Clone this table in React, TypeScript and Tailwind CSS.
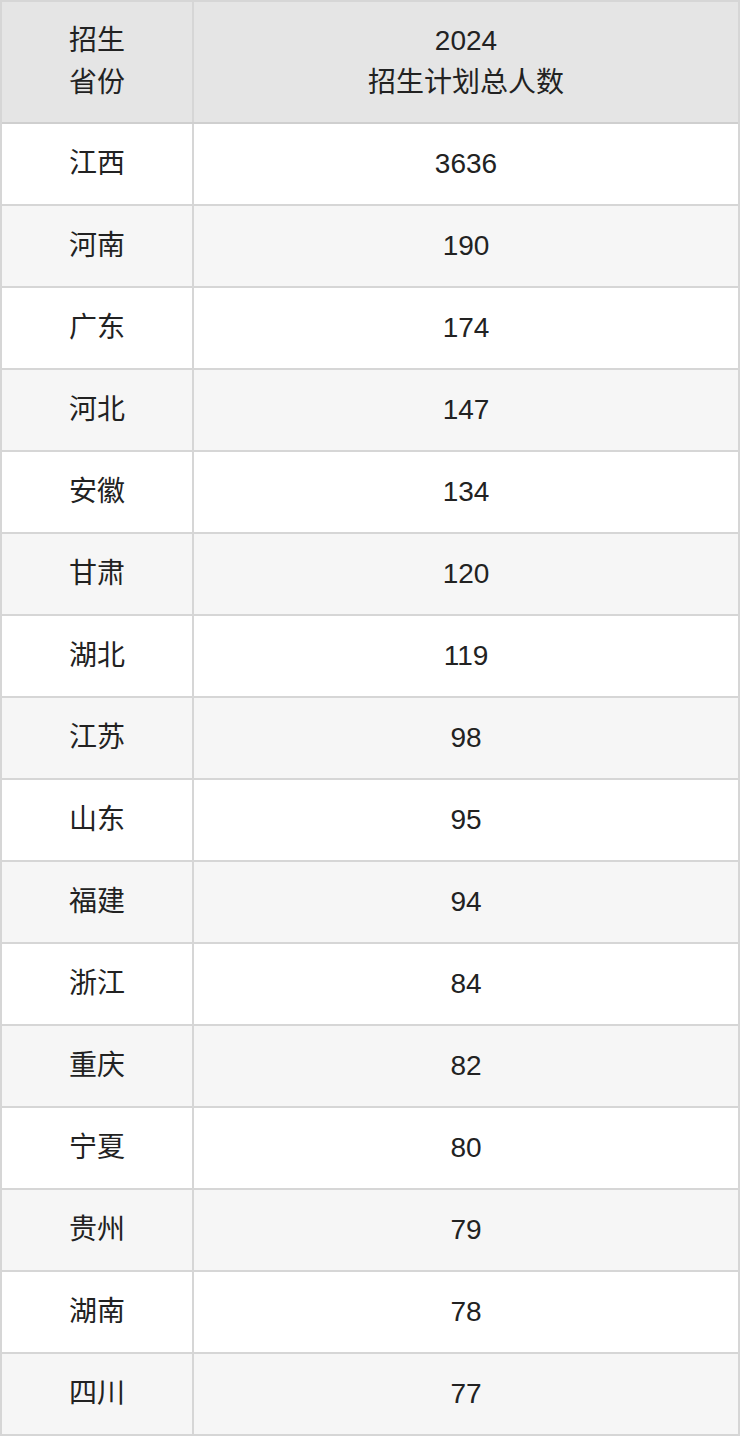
const rows: [string, string][] = [
  ['江西', '3636'],
  ['河南', '190'],
  ['广东', '174'],
  ['河北', '147'],
  ['安徽', '134'],
  ['甘肃', '120'],
  ['湖北', '119'],
  ['江苏', '98'],
  ['山东', '95'],
  ['福建', '94'],
  ['浙江', '84'],
  ['重庆', '82'],
  ['宁夏', '80'],
  ['贵州', '79'],
  ['湖南', '78'],
  ['四川', '77'],
];

export default function App() {
  return (
    <div
      className="w-[740px] bg-white text-[28px] leading-[42px] text-[#222]"
      style={{ fontFamily: '"Liberation Sans", "Noto Sans CJK SC", sans-serif' }}
    >
      <div className="border-x-2 border-t-2 border-[#d6d6d6]">
        <div className="flex h-[122px] border-b-2 border-[#cfcfcf] bg-[#e5e5e5]">
          <div className="flex w-[192px] shrink-0 items-center justify-center border-r-2 border-[#d6d6d6] text-center">
            招生
            <br />
            省份
          </div>
          <div className="flex flex-1 items-center justify-center text-center">
            2024
            <br />
            招生计划总人数
          </div>
        </div>
        {rows.map(([province, count], i) => (
          <div
            key={province}
            className={`flex h-[82px] border-b-2 border-[#d6d6d6] ${i % 2 === 0 ? 'bg-white' : 'bg-[#f6f6f6]'}`}
          >
            <div className="flex w-[192px] shrink-0 items-center justify-center border-r-2 border-[#d6d6d6]">
              {province}
            </div>
            <div className="flex flex-1 items-center justify-center">{count}</div>
          </div>
        ))}
      </div>
    </div>
  );
}
